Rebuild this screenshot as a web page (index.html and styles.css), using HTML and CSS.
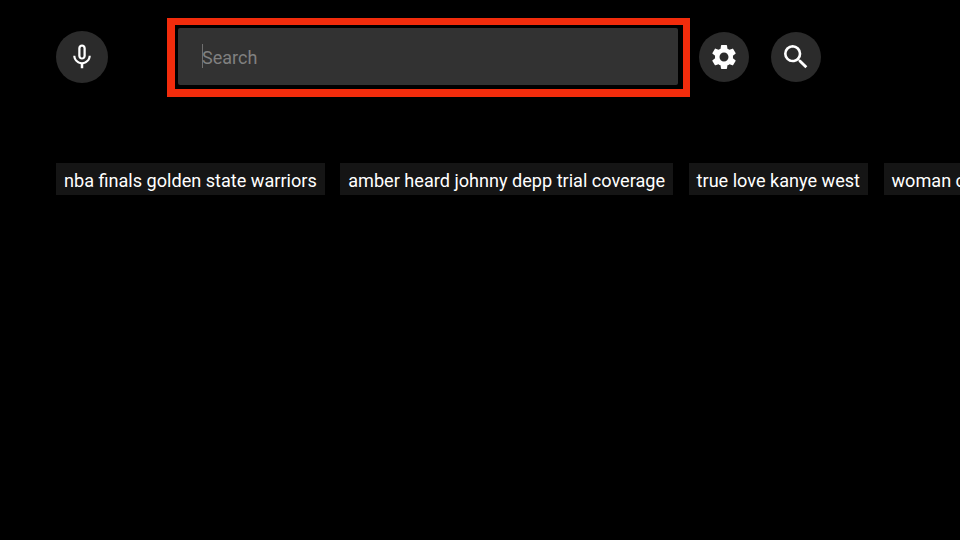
FILE: index.html
```html
<!DOCTYPE html>
<html lang="en">
<head>
<meta charset="utf-8">
<title>Search</title>
<link rel="stylesheet" href="styles.css">
</head>
<body>
<div class="page">
  <header class="top">
    <button class="circle mic" aria-label="Voice search">
      <svg width="30" height="30" viewBox="0 0 24 24"><path fill="#fff" d="M12 14c1.660 0 3-1.340 3-3V5c0-1.660-1.340-3-3-3S9 3.340 9 5v6c0 1.660 1.340 3 3 3zm-1.200-9.100c0-.66.54-1.200 1.200-1.200s1.200.54 1.200 1.200l-.01 6.200c0 .66-.53 1.200-1.190 1.200s-1.200-.54-1.200-1.200V4.900zm6.500 6.100c0 3-2.540 5.100-5.300 5.100S6.700 14 6.700 11H5c0 3.410 2.720 6.230 6 6.720V21h2v-3.280c3.280-.48 6-3.300 6-6.720h-1.700z"/></svg>
    </button>
    <div class="highlight">
      <div class="field"><span class="caret"></span><span class="placeholder">Search</span></div>
    </div>
    <button class="circle settings" aria-label="Settings">
      <svg width="30" height="30" viewBox="0 0 24 24"><path fill="#fff" d="M19.140 12.940c.04-.3.060-.61.060-.94 0-.32-.02-.64-.07-.94l2.030-1.580a.49.49 0 0 0 .12-.61l-1.920-3.320a.488.488 0 0 0-.59-.22l-2.390.96c-.5-.38-1.030-.7-1.620-.94l-.36-2.540a.484.484 0 0 0-.48-.41h-3.840c-.24 0-.43.170-.47.410l-.36 2.540c-.59.240-1.130.570-1.620.94l-2.390-.96c-.22-.080-.47 0-.59.220L2.740 8.870c-.12.210-.08.470.12.610l2.030 1.580c-.05.3-.09.630-.09.940s.02.640.07.940l-2.030 1.580a.49.49 0 0 0-.12.610l1.920 3.320c.12.220.37.290.59.220l2.390-.96c.5.380 1.030.7 1.620.94l.36 2.540c.05.240.24.410.48.410h3.840c.24 0 .44-.17.470-.41l.36-2.540c.59-.24 1.130-.56 1.620-.94l2.390.96c.22.080.47 0 .59-.22l1.920-3.320c.12-.22.070-.47-.12-.61l-2.010-1.580zM12 15.600c-1.980 0-3.600-1.620-3.600-3.600s1.620-3.600 3.600-3.600 3.600 1.620 3.600 3.600-1.620 3.600-3.600 3.600z"/></svg>
    </button>
    <button class="circle find" aria-label="Search">
      <svg width="32" height="32" viewBox="0 0 24 24"><path fill="#fff" d="M15.500 14h-.79l-.28-.27A6.471 6.471 0 0 0 16 9.500 6.500 6.500 0 1 0 9.500 16c1.610 0 3.090-.59 4.230-1.570l.27.28v.79l5 4.990L20.490 19l-4.990-5zm-6 0C7.010 14 5 11.990 5 9.500S7.010 5 9.500 5 14 7.010 14 9.500 11.990 14 9.500 14z"/></svg>
    </button>
  </header>
  <div class="tags">
    <span class="tag">nba finals golden state warriors</span>
    <span class="tag">amber heard johnny depp trial coverage</span>
    <span class="tag">true love kanye west</span>
    <span class="tag">woman crush wednesday</span>
  </div>
</div>
</body>
</html>
```
FILE: styles.css
```css
* { box-sizing: border-box; }
html, body { margin: 0; height: 100%; background: #000; }
body { overflow: hidden; font-family: Roboto, "Liberation Sans", sans-serif; }
.page { width: 960px; height: 540px; overflow: hidden; padding: 18px 0 0 56px; }
.top { display: flex; align-items: flex-start; height: 79px; }
.circle {
  flex: none; width: 50px; height: 50px; margin: 14px 0 0; padding: 0; border: 0; border-radius: 50%;
  background: #2b2b2b; display: flex; align-items: center; justify-content: center;
}
.mic { width: 52px; height: 52px; margin: 13px 59px 0 0; }
.settings { margin-left: 9px; }
.find { margin-left: 22px; }
.highlight {
  flex: none; width: 523px; height: 79px;
  border-style: solid; border-color: #f22c0c; border-width: 7px 7px 8px 8px;
  background: #000; padding: 3px 5px 4px 3px;
}
.field {
  height: 100%; background: #323232; border-radius: 2px; padding: 1px 0 0 24px;
  display: flex; align-items: center;
}
.caret { width: 1px; height: 24px; margin: -2px -1px 0 0; background: #6f6f6f; flex: none; }
.placeholder { font-size: 18px; color: #808080; }
.tags { display: flex; gap: 15.500px; margin-top: 66px; white-space: nowrap; }
.tag {
  flex: none; height: 32px; line-height: 35px; padding: 0 8px; background: #151515;
  color: #fff; font-size: 18.100px; font-variant-ligatures: common-ligatures;
}
```
